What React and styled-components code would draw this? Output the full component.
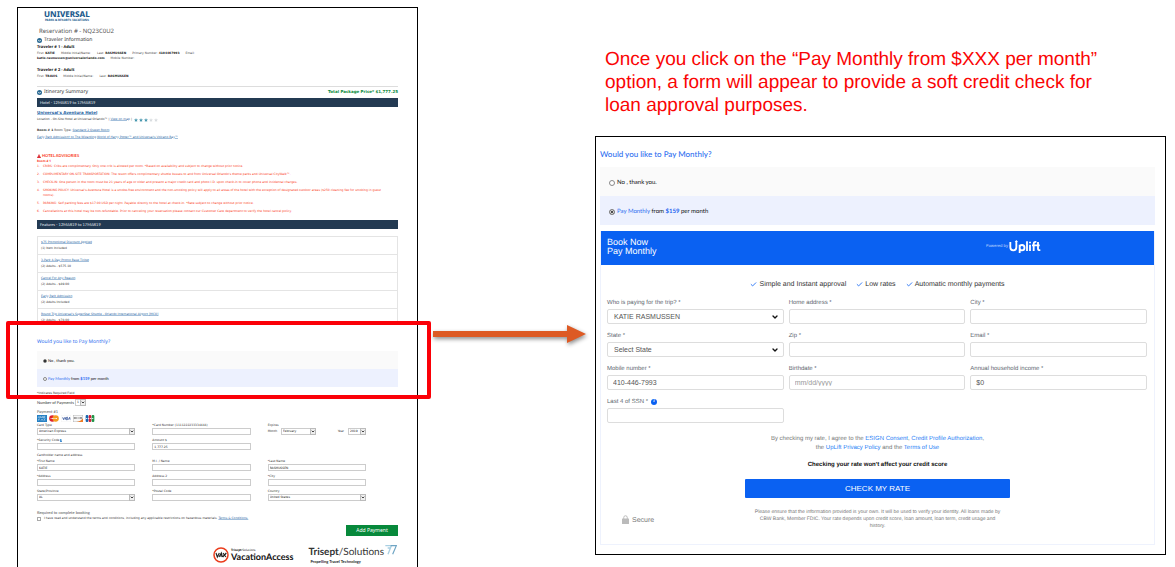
import React, { useState } from "react";
import styled, { createGlobalStyle, css } from "styled-components";
import { Check, ChevronDown } from "lucide-react";

const sans = '"Liberation Sans", Arial, sans-serif';
const humanist = 'Lato, "Noto Sans", sans-serif';
const noto = '"Noto Sans", sans-serif';
const wide = '"DejaVu Sans", Verdana, sans-serif';

const GlobalStyle = createGlobalStyle`
  *, *::before, *::after { box-sizing: border-box; }
  body { margin: 0; background: #fff; color: #222; text-rendering: geometricPrecision; }
  h1, h2, h3, h4, p, ul, ol { margin: 0; padding: 0; font-weight: inherit; }
  ul, ol { list-style: none; }
  button, input, select { font: inherit; color: inherit; margin: 0; }
`;

/* ---------- Slide ---------- */

const Slide = styled.main`
  display: grid;
  grid-template-columns: minmax(0, 401fr) minmax(0, 177fr) minmax(0, 571fr);
  min-height: 100vh;
  padding: 7px 9px 0 17px;
`;

const Sheet = styled.section`
  border: 1px solid #000;
  border-width: 1px 1px 0;
  padding: 2px 19px 0;
  font: 3px/5px ${wide};
  color: #333;
`;

const ArrowColumn = styled.div`
  padding: 316px 8px 0 15px;
  svg { display: block; width: 100%; height: 26px; overflow: visible; filter: drop-shadow(1px 2px 2px rgba(0, 0, 0, 0.45)); }
`;

const RightColumn = styled.div`
  padding-top: 41px;
`;

const Note = styled.p`
  padding-left: 10px;
  margin-bottom: 19px;
  font: 19px/23px ${sans};
  color: #fa0505;
`;

/* ---------- Reservation sheet ---------- */

const Brand = styled.div`
  display: inline-flex;
  flex-direction: column;
  align-items: center;
  margin-left: 7px;
  color: #1d5c8e;
  font-family: ${noto};
  font-weight: 800;
  vertical-align: top;
  span:first-child { font-size: 8px; line-height: 9px; }
  span:last-child { font-size: 3px; line-height: 3px; font-weight: 700; }
`;

const ReservationTitle = styled.h1`
  margin: 4px 0 0 2px;
  font: 6px/10px ${noto};
  color: #555;
`;

const SectionTitle = styled.h2`
  display: flex;
  align-items: center;
  gap: 2px;
  font: 5px/8px ${noto};
  color: #333;
  svg { width: 5px; height: 5px; }
`;

const Traveler = styled.div`
  margin-bottom: ${(p) => (p.$last ? 7 : 6)}px;
  color: #444;
  h3 { font: 700 4px/7px ${noto}; color: #111; }
  b { color: #222; }
`;

const Fields = styled.p`
  display: flex;
  gap: 6px;
`;

const SummaryRow = styled.div`
  display: flex;
  justify-content: space-between;
  align-items: center;
  height: 12px;
  padding-bottom: 1px;
  border-top: 1px solid #ddd;
  strong { font: 700 4px/8px ${wide}; color: #0b8a3c; }
`;

const Bar = styled.h3`
  padding-left: 3px;
  background: #233a52;
  font: 4px/9px ${humanist};
  color: #e2e8ee;
`;

const Link = styled.a`
  color: #1f5f9f;
  text-decoration: underline 1px #a3bfdb;
  text-underline-offset: 0;
`;

const Hotel = styled.div`
  padding: 2px 0 11px;
  h3 { font: 700 4px/8px ${wide}; }
`;

const LocationLine = styled.p`
  display: flex;
  align-items: center;
  gap: 1px;
  margin-bottom: 5px;
`;

const Stars = styled.span`
  display: inline-flex;
  gap: 1px;
  margin-left: 1px;
  svg { width: 4px; height: 4px; }
`;

const RoomLine = styled.p`
  margin-bottom: 1px;
  line-height: 6px;
`;

const Advisories = styled.div`
  margin-bottom: 6px;
  color: #fa3a18;
  h3 { display: flex; align-items: center; gap: 1px; font: 700 4px/7px ${humanist}; }
  h3 svg { width: 4px; height: 4px; }
  h4 { margin: 0 0 1px; font: 700 3px/4px ${noto}; }
  ol { display: flex; flex-direction: column; gap: 3px; }
  li { display: flex; padding-right: 8px; }
  li span { flex: 0 0 6px; }
`;

const FeatureList = styled.ul`
  margin-top: 7px;
  border: 1px solid #e4e4e4;
  border-bottom: 0;
  li { padding: 2px 3px 3px; border-bottom: 1px solid #e4e4e4; line-height: 6px; }
  li:last-child { padding-bottom: 0; }
  a { display: table; }
`;

const Highlight = styled.div`
  position: relative;
  padding-top: 14px;
  margin-bottom: 4px;
  &::after {
    content: "";
    position: absolute;
    inset: -3px -33px -12px -31px;
    border: 4px solid #fb0007;
    border-radius: 2px;
    pointer-events: none;
  }
`;

/* ---------- Pay monthly choice ---------- */

const Choice = styled.fieldset`
  margin: 0;
  padding: 0;
  border: 0;
  legend {
    padding: 0;
    margin-bottom: ${(p) => (p.$large ? 8 : 4)}px;
    font: ${(p) => (p.$large ? `500 8px/10px ${humanist}` : `5px/9px ${noto}`)};
    color: #2f6ff0;
  }
`;

const Option = styled.label`
  display: flex;
  align-items: center;
  gap: ${(p) => (p.$large ? 2 : 1)}px;
  padding-left: ${(p) => (p.$large ? 9 : 6)}px;
  padding-top: 2px;
  height: ${(p) => (p.$large ? "29px" : "18px")};
  background: ${(p) => (p.$tint ? "#edf1fe" : "#fafafa")};
  font: ${(p) => (p.$large ? "6px/8px" : "4px/6px")} ${humanist};
  color: #111;
  em { font-style: normal; color: #2f6ff0; }
  strong { color: #1a63f0; }
`;

const Radio = styled.input`
  appearance: none;
  flex: none;
  width: ${(p) => (p.$large ? 6 : 4)}px;
  height: ${(p) => (p.$large ? 6 : 4)}px;
  border: 1px solid #888;
  border-radius: 50%;
  background: #fff;
  &:checked { background: #111; box-shadow: ${(p) => (p.$large ? "inset 0 0 0 1px #fff" : "none")}; }
`;

function PayMonthly({ name, large, initial }) {
  const [value, setValue] = useState(initial);
  const radio = (v) => (
    <Radio type="radio" name={name} $large={large} checked={value === v} onChange={() => setValue(v)} />
  );
  return (
    <Choice $large={large}>
      <legend>Would you like to Pay Monthly?</legend>
      <Option $large={large}>
        {radio("no")}
        <span>No , thank you.</span>
      </Option>
      <Option $large={large} $tint>
        {radio("monthly")}
        <span><em>Pay Monthly</em> from <strong>$159</strong> per month</span>
      </Option>
    </Choice>
  );
}

/* ---------- Card form ---------- */

const CountRow = styled.label`
  display: flex;
  align-items: center;
  gap: 1px;
  margin: 3px 0;
  font: 4px/7px ${humanist};
`;

const PaymentName = styled.h3`
  font: 4px/6px ${humanist};
  color: #555;
`;

const Cards = styled.div`
  display: flex;
  gap: 2px;
  height: 8px;
  svg { width: 10px; height: 7px; }
`;

const CardGrid = styled.div`
  display: grid;
  grid-template-columns: repeat(3, minmax(0, 1fr));
  gap: 3px 17px;
  padding-right: 32px;
  color: #333;
`;

const CardCaption = styled.p`
  padding: 3px 0 1px;
  font-size: 3px;
  line-height: 5px;
`;

const SmallField = styled.label`
  display: block;
  line-height: 5px;
`;

const smallControl = css`
  appearance: none;
  display: block;
  width: 100%;
  height: 7px;
  padding: 0 1px;
  border: 1px solid #ccc;
  border-radius: 0;
  background: #fff;
  font: 3px/5px ${wide};
  color: #222;
`;

const SmallInput = styled.input`${smallControl}`;
const SmallSelect = styled.select`${smallControl}`;

const SmallPick = styled.span`
  position: relative;
  display: block;
  width: ${(p) => p.$w || "100%"};
  svg {
    position: absolute;
    right: 0;
    top: 0;
    width: 6px;
    height: 7px;
    border: 1px solid #bbb;
    background: #eee;
    pointer-events: none;
    color: #222;
  }
`;

const Expiry = styled.div`
  display: flex;
  align-items: center;
  justify-content: space-between;
  label { display: flex; align-items: center; gap: 4px; }
`;

const HelpMark = styled.span`
  display: inline-block;
  margin-left: 1px;
  background: #4a90d0;
  color: #fff;
  font-weight: 700;
  line-height: 3px;
`;

const Required = styled.h3`
  margin-top: 9px;
  font: 4px/6px ${humanist};
  color: #555;
`;

const Agree = styled.label`
  display: flex;
  align-items: center;
  gap: 3px;
  line-height: 5px;
  input { appearance: none; width: 4px; height: 4px; border: 1px solid #aaa; background: #fff; }
`;

const AddButton = styled.button`
  display: block;
  width: 52px;
  margin: 4px 0 0 auto;
  padding: 0;
  border: 0;
  background: #07893b;
  color: #fff;
  font: 5px/11px ${noto};
`;

const Partners = styled.footer`
  display: flex;
  justify-content: flex-end;
  align-items: flex-start;
  gap: 15px;
  padding: 7px 1px 0 0;
`;

const Vax = styled.div`
  display: flex;
  align-items: center;
  gap: 2px;
  padding-top: 4px;
  svg { width: 16px; height: 16px; }
`;

const VaxName = styled.div`
  display: flex;
  flex-direction: column;
  color: #111;
  small { font: 3px/4px ${noto}; }
  strong { font: 700 9px/10px ${humanist}; }
`;

const Trisept = styled.div`
  display: grid;
  grid-template-columns: auto 12px;
  column-gap: 1px;
  p { font: 10px/13px ${humanist}; color: #333; padding-top: 3px; }
  small { grid-column: 1 / -1; padding-left: 2px; font: 700 4px/5px ${humanist}; color: #222; }
  svg { width: 12px; height: 12px; margin-top: 1px; }
`;

/* ---------- Uplift panel ---------- */

const Panel = styled.section`
  border: 1px solid #000;
  padding: 12px 10px 9px 4px;
`;

const Widget = styled.div`
  margin-top: 6px;
  border: 1px solid #eef2fd;
  border-top: 0;
  font: 6px/8px ${sans};
`;

const WidgetHeader = styled.header`
  display: flex;
  align-items: center;
  justify-content: space-between;
  height: 34px;
  padding: 0 113px 3px 6px;
  background: #0a61f2;
  color: #fff;
  h2 { font: 9px/9px ${sans}; }
`;

const Powered = styled.p`
  display: flex;
  align-items: center;
  gap: 1px;
  small { font: 4px/8px ${noto}; color: #c5dbff; }
  svg { width: 32px; height: 14px; }
`;

const Benefits = styled.ul`
  display: flex;
  justify-content: center;
  gap: 10px;
  padding: 15px 0 8px;
  font-size: 7px;
  line-height: 9px;
  color: #333;
  li { display: flex; align-items: center; gap: 2px; }
  svg { width: 7px; height: 7px; color: #1a6bf5; }
`;

const RateForm = styled.form`
  display: block;
`;

const FormGrid = styled.div`
  display: grid;
  grid-template-columns: repeat(3, minmax(0, 1fr));
  gap: 6px 5px;
  padding: 0 7px 0 6px;
`;

const Field = styled.label`
  display: block;
  color: #5d6670;
  > span:first-child { display: flex; align-items: center; gap: 3px; height: 12px; }
`;

const control = css`
  appearance: none;
  display: block;
  width: 100%;
  height: 15px;
  padding: 0 5px;
  border: 1px solid #ddd;
  border-radius: 2px;
  background: #fff;
  font: 7px/13px ${sans};
  color: #555;
`;

const Input = styled.input`
  ${control}
  &::placeholder { color: #999; opacity: 1; }
`;

const Select = styled.select`
  ${control}
  padding-left: 6px;
`;

const Pick = styled.span`
  position: relative;
  display: block;
  svg { position: absolute; right: 5px; top: 4px; width: 8px; height: 8px; color: #111; pointer-events: none; }
`;

const InfoDot = styled.i`
  width: 6px;
  height: 6px;
  border-radius: 50%;
  background: #0a61f2;
  color: #fff;
  font: italic 700 5px/6px "Liberation Serif", serif;
  text-align: center;
`;

const Consent = styled.div`
  margin-top: 12px;
  text-align: center;
  color: #777;
  p { line-height: 9px; }
  a { color: #1f80f5; text-decoration: none; }
  strong { display: block; padding: 8px 0 10px; color: #111; }
`;

const RateButton = styled.button`
  display: block;
  width: 48%;
  margin: 0 auto;
  padding: 0;
  border: 0;
  border-radius: 1px;
  background: #0a61f2;
  color: #fff;
  font: 8px/19px ${sans};
`;

const FinePrint = styled.div`
  display: grid;
  grid-template-columns: 1fr 250px 1fr;
  align-items: center;
  padding: 11px 0 14px;
  p { text-align: center; font-size: 5px; line-height: 7px; color: #777; }
`;

const Secure = styled.span`
  display: flex;
  align-items: center;
  gap: 3px;
  padding: 2px 0 0 21px;
  font-size: 7px;
  color: #777;
  svg { width: 7px; height: 9px; margin-bottom: 3px; }
`;

/* ---------- Drawings ---------- */

const Bullet = () => (
  <svg viewBox="0 0 10 10" aria-hidden="true">
    <circle cx="5" cy="5" r="5" fill="#2b6a93" />
    <path d="M2.5 4l2.5 2.6L7.5 4" fill="none" stroke="#fff" strokeWidth="1.6" />
  </svg>
);

const Star = ({ on }) => (
  <svg viewBox="0 0 10 10" aria-hidden="true">
    <path d="M5 0l1.4 3.5 3.6.2-2.8 2.4.9 3.7L5 7.8 1.9 9.8l.9-3.7L0 3.7l3.6-.2z" fill={on ? "#4596ae" : "#d8dcdf"} />
  </svg>
);

const Warning = () => (
  <svg viewBox="0 0 10 10" aria-hidden="true">
    <path d="M5 0l5 10H0z" fill="#d8121b" />
    <path d="M5 3.4v3.4M5 7.8v1.2" stroke="#fff" strokeWidth="1.2" />
  </svg>
);

const CardLogos = () => (
  <Cards aria-hidden="true">
    <svg viewBox="0 0 30 21">
      <rect width="30" height="21" fill="#2580c3" />
      <path d="M3 9l3-5 3 5M11 9V4l3 4 3-4v5M25 4h-5v5h5M20 6.500h4M5 17v-5h4M12 17l3-5 3 5M20 12l5 5M25 12l-5 5" stroke="#d8ecfa" strokeWidth="1.500" fill="none" />
    </svg>
    <svg viewBox="0 0 30 21">
      <circle cx="10" cy="10.500" r="9.500" fill="#e0232e" />
      <circle cx="20" cy="10.500" r="9.500" fill="#f59b1f" />
      <path d="M5 10.500h20" stroke="#fff" strokeWidth="2.500" strokeDasharray="3 1" />
    </svg>
    <svg viewBox="0 0 30 21">
      <rect x=".5" y=".5" width="29" height="20" fill="#fff" stroke="#eee" />
      <path d="M5 7l3 7 3-7M14 7l-1 7M21 7h-4l-1 3 4 1-1 3h-4M22 14l4-7 1 7" stroke="#1b3f8f" strokeWidth="2.200" fill="none" />
    </svg>
    <svg viewBox="0 0 30 21">
      <rect x=".5" y=".5" width="29" height="20" fill="#f7f7f7" stroke="#999" />
      <path d="M30 10v11H10c9-1 16-5 20-11z" fill="#ee7b24" />
      <path d="M4 6v6M7 6v6M13 6l-3 3 3 3M18 6v6M22 6l2 6 2-6" stroke="#444" strokeWidth="1.600" fill="none" />
    </svg>
    <svg viewBox="0 0 30 21">
      <rect x="2" width="8" height="21" rx="3" fill="#1766ae" />
      <rect x="11" width="8" height="21" rx="3" fill="#d21f3c" />
      <rect x="20" width="8" height="21" rx="3" fill="#1f9547" />
      <path d="M3 10.500h24" stroke="#fff" strokeWidth="2.500" strokeDasharray="4 2" />
    </svg>
  </Cards>
);

const VaxLogo = () => (
  <svg viewBox="0 0 48 48" aria-hidden="true">
    <circle cx="24" cy="24" r="21" fill="#fff" stroke="#ea3c1c" strokeWidth="4.500" />
    <path d="M9 18l4 12 6-12M18 30l7-12 3 12M21 27h6M30 18l9 12M40 18L29 30" fill="none" stroke="#222" strokeWidth="3.500" />
  </svg>
);

const Sevens = () => (
  <svg viewBox="0 0 36 36" aria-hidden="true">
    <path d="M1 5h18L9 31M8 12h7" fill="none" stroke="#a9cfe2" strokeWidth="4" />
    <path d="M17 5h17L23 31" fill="none" stroke="#6fa5c4" strokeWidth="3.500" />
  </svg>
);

const UpliftLogo = () => (
  <svg viewBox="0 0 96 42" role="img" aria-label="Uplift">
    <g fill="none" stroke="#fff" strokeWidth="5.500">
      <path d="M4 6v16c0 6 3.500 9 9 9s9-3 9-9V5" />
      <path d="M32 39V14M32 22c0-5 3-7 7-7s7.500 3 7.500 8-3.500 8-7.500 8-7-3-7-7" />
      <path d="M54 4v29" />
      <path d="M63 14v19M63 5v5" />
      <path d="M74 33V12c0-5 2-7 8-6.500M69 16h23" />
      <path d="M87 6v20c0 4 2 5 7 4.500" />
    </g>
    <path d="M17 6l5-6 5 6z" fill="#fff" />
  </svg>
);

const Lock = () => (
  <svg viewBox="0 0 14 18" aria-hidden="true">
    <path d="M3.500 8V5a3.500 3.500 0 0 1 7 0v3" fill="none" stroke="#bbb" strokeWidth="2" />
    <rect y="7" width="14" height="11" rx="1" fill="#bbb" />
  </svg>
);

const Arrow = () => (
  <svg viewBox="0 0 154 26" preserveAspectRatio="none" aria-hidden="true">
    <path d="M0 8h134V2l19 9-19 9v-6H0z" fill="#dd5a24" />
  </svg>
);

/* ---------- Content ---------- */

const advisories = [
  "CRIBS: Cribs are complimentary. Only one crib is allowed per room. *Based on availability and subject to change without prior notice.",
  "COMPLIMENTARY ON-SITE TRANSPORTATION: The resort offers complimentary shuttle busses to and from Universal Orlando's theme parks and Universal CityWalk™.",
  "CHECK-IN: One person in the room must be 21 years of age or older and present a major credit card and photo I.D. upon check-in to cover phone and incidental charges.",
  "SMOKING POLICY: Universal's Aventura Hotel is a smoke-free environment and the non-smoking policy will apply to all areas of the hotel with the exception of designated outdoor areas ($250 cleaning fee for smoking in guest rooms).",
  "PARKING: Self parking fees are $17.00 USD per night. Payable directly to the hotel at check-in. *Rate subject to change without prior notice.",
  "Cancellations at this hotel may be non-refundable. Prior to canceling your reservation please contact our Customer Care department to verify the hotel cancel policy.",
];

const features = [
  ["$75 Promotional Discount Applied", "(1) Item Included"],
  ["3-Park 4-Day Promo Base Ticket", "(2) Adults - $575.10"],
  ["Cancel For Any Reason", "(2) Adults - $89.00"],
  ["Early Park Admission", "(2) Adults Included"],
  ["Round Trip Universal's SuperStar Shuttle - Orlando International Airport [MCO]", "(2) Adults - $78.00"],
];

const SmallText = ({ label, value = "", help }) => (
  <SmallField>
    {label}{help && <HelpMark>?</HelpMark>}
    <SmallInput defaultValue={value} />
  </SmallField>
);

const SmallDrop = ({ value, width }) => (
  <SmallPick $w={width}>
    <SmallSelect><option>{value}</option></SmallSelect>
    <ChevronDown strokeWidth={5} />
  </SmallPick>
);

const TextField = ({ label, value, placeholder, info }) => (
  <Field>
    <span>{label}{info && <InfoDot>i</InfoDot>}</span>
    <Input defaultValue={value} placeholder={placeholder} />
  </Field>
);

const SelectField = ({ label, value }) => (
  <Field>
    <span>{label}</span>
    <Pick>
      <Select><option>{value}</option></Select>
      <ChevronDown strokeWidth={4} />
    </Pick>
  </Field>
);

function Reservation() {
  return (
    <Sheet>
      <Brand><span>UNIVERSAL</span><span>PARKS &amp; RESORTS VACATIONS</span></Brand>
      <ReservationTitle>Reservation # - NQ23C0U2</ReservationTitle>
      <SectionTitle><Bullet />Traveler Information</SectionTitle>
      <Traveler>
        <h3>Traveler # 1 - Adult</h3>
        <Fields>
          <span>First: <b>KATIE</b></span><span>Middle Initial/Name:</span><span>Last: <b>RASMUSSEN</b></span>
          <span>Primary Number: <b>4104467993</b></span><span>Email:</span>
        </Fields>
        <Fields><b>katie.rasmussen@universalorlando.com</b><span>Mobile Number:</span></Fields>
      </Traveler>
      <Traveler $last>
        <h3>Traveler # 2 - Adult</h3>
        <Fields>
          <span>First: <b>TRAVIS</b></span><span>Middle Initial/Name:</span><span>Last: <b>RASMUSSEN</b></span>
        </Fields>
      </Traveler>
      <SummaryRow>
        <SectionTitle><Bullet />Itinerary Summary</SectionTitle>
        <strong>Total Package Price* $1,777.25</strong>
      </SummaryRow>
      <Bar>Hotel - 12MAR19 to 17MAR19</Bar>
      <Hotel>
        <h3><Link href="#hotel">Universal's Aventura Hotel</Link></h3>
        <LocationLine>
          Location - On-Site Hotel at Universal Orlando™ | <Link href="#map">View on map</Link> |
          <Stars><Star on /><Star on /><Star on /><Star /><Star /></Stars>
        </LocationLine>
        <RoomLine><b>Room # 1</b> Room Type: <Link href="#room">Standard 2 Queen Room</Link></RoomLine>
        <RoomLine>
          <Link href="#early">Early Park Admission† to The Wizarding World of Harry Potter™ and Universal's Volcano Bay™</Link>
        </RoomLine>
      </Hotel>
      <Advisories>
        <h3><Warning />HOTEL ADVISORIES</h3>
        <h4>Room # 1</h4>
        <ol>
          {advisories.map((text, i) => <li key={i}><span>{i + 1}.</span><p>{text}</p></li>)}
        </ol>
      </Advisories>
      <Bar>Features - 12MAR19 to 17MAR19</Bar>
      <FeatureList>
        {features.map(([name, detail]) => (
          <li key={name}><Link href="#feature">{name}</Link>{detail}</li>
        ))}
      </FeatureList>
      <Highlight><PayMonthly name="sheet-choice" initial="no" /></Highlight>
      <p>*Indicates Required Field</p>
      <CountRow>Number of Payments <SmallDrop value="1" width="11px" /></CountRow>
      <PaymentName>Payment #1</PaymentName>
      <CardLogos />
      <CardGrid>
        <SmallField>Card Type<SmallDrop value="American Express" /></SmallField>
        <SmallText label="*Card Number (1111222233334444)" />
        <div>
          Expires
          <Expiry>
            <label>Month <SmallDrop value="February" width="35px" /></label>
            <label>Year <SmallDrop value="2019" width="18px" /></label>
          </Expiry>
        </div>
        <SmallText label="*Security Code" help />
        <SmallText label="Amount $" value="1,777.25" />
      </CardGrid>
      <CardCaption>Cardholder name and address</CardCaption>
      <CardGrid>
        <SmallText label="*First Name" value="KATIE" />
        <SmallText label="M.I. / Name" />
        <SmallText label="*Last Name" value="RASMUSSEN" />
        <SmallText label="*Address" />
        <SmallText label="Address 2" />
        <SmallText label="*City" />
        <SmallField>State/Province<SmallDrop value="AL" /></SmallField>
        <SmallText label="*Postal Code" />
        <SmallField>Country<SmallDrop value="United States" /></SmallField>
      </CardGrid>
      <Required>Required to complete booking</Required>
      <Agree>
        <input type="checkbox" />
        <span>
          I have read and understand the terms and conditions, including any applicable restrictions on hazardous materials.{" "}
          <Link href="#terms">Terms &amp; Conditions.</Link>
        </span>
      </Agree>
      <AddButton type="button">Add Payment</AddButton>
      <Partners>
        <Vax>
          <VaxLogo />
          <VaxName><small><b>Trisept</b>/Solutions</small><strong>VacationAccess</strong></VaxName>
        </Vax>
        <Trisept>
          <p><b>Trisept</b>/Solutions</p>
          <Sevens />
          <small>Propelling Travel Technology</small>
        </Trisept>
      </Partners>
    </Sheet>
  );
}

function UpliftForm() {
  return (
    <Panel>
      <PayMonthly name="panel-choice" large initial="monthly" />
      <Widget>
        <WidgetHeader>
          <h2>Book Now<br />Pay Monthly</h2>
          <Powered><small>Powered by</small><UpliftLogo /></Powered>
        </WidgetHeader>
        <Benefits>
          {["Simple and Instant approval", "Low rates", "Automatic monthly payments"].map((t) => (
            <li key={t}><Check strokeWidth={3} />{t}</li>
          ))}
        </Benefits>
        <RateForm onSubmit={(e) => e.preventDefault()}>
          <FormGrid>
            <SelectField label="Who is paying for the trip? *" value="KATIE RASMUSSEN" />
            <TextField label="Home address *" />
            <TextField label="City *" />
            <SelectField label="State *" value="Select State" />
            <TextField label="Zip *" />
            <TextField label="Email *" />
            <TextField label="Mobile number *" value="410-446-7993" />
            <TextField label="Birthdate *" placeholder="mm/dd/yyyy" />
            <TextField label="Annual household income *" value="$0" />
            <TextField label="Last 4 of SSN *" info />
          </FormGrid>
          <Consent>
            <p>
              By checking my rate, I agree to the <a href="#esign">ESIGN Consent</a>, <a href="#credit">Credit Profile Authorization</a>,
              <br />
              the <a href="#privacy">UpLift Privacy Policy</a> and the <a href="#use">Terms of Use</a>
            </p>
            <strong>Checking your rate won't affect your credit score</strong>
          </Consent>
          <RateButton type="submit">CHECK MY RATE</RateButton>
          <FinePrint>
            <Secure><Lock />Secure</Secure>
            <p>
              Please ensure that the information provided is your own. It will be used to verify your identity. All loans made by
              CBW Bank, Member FDIC. Your rate depends upon credit score, loan amount, loan term, credit usage and history.
            </p>
          </FinePrint>
        </RateForm>
      </Widget>
    </Panel>
  );
}

export default function App() {
  return (
    <>
      <GlobalStyle />
      <Slide>
        <Reservation />
        <ArrowColumn><Arrow /></ArrowColumn>
        <RightColumn>
          <Note>
            Once you click on the “Pay Monthly from $XXX per month”
            <br />
            option, a form will appear to provide a soft credit check for
            <br />
            loan approval purposes.
          </Note>
          <UpliftForm />
        </RightColumn>
      </Slide>
    </>
  );
}
